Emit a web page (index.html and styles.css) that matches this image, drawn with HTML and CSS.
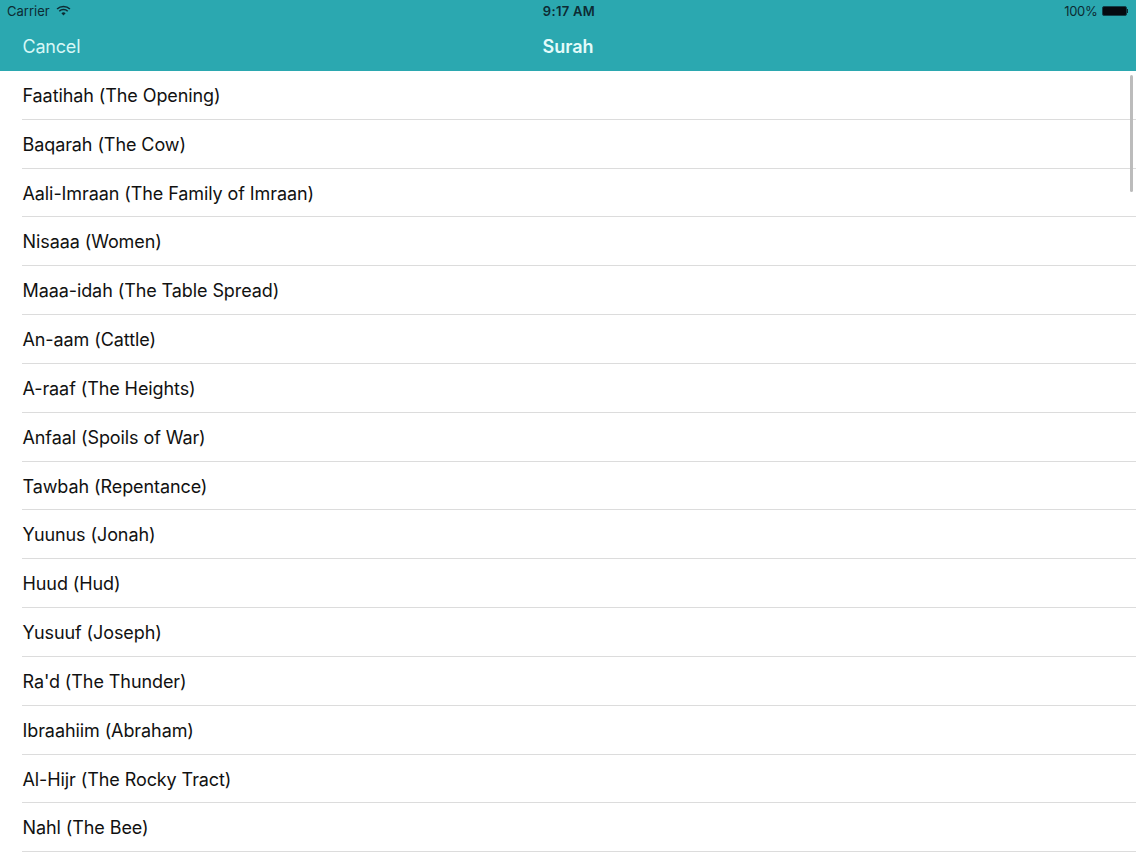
FILE: index.html
```html
<!DOCTYPE html>
<html lang="en">
<head>
<meta charset="utf-8">
<title>Surah</title>
<link rel="stylesheet" href="styles.css">
</head>
<body>
<div class="screen">
  <header class="header">
    <div class="status">
      <div class="status-left">
        <span>Carrier</span>
        <svg class="wifi" viewBox="0 0 16 12" width="15" height="11"><path d="M1 4.4a10 10 0 0 1 14 0" fill="none" stroke="#0d2b33" stroke-width="1.7"/><path d="M3.4 6.8a6.6 6.6 0 0 1 9.2 0" fill="none" stroke="#0d2b33" stroke-width="1.7"/><path d="M8 11.4 5.7 9a3.3 3.3 0 0 1 4.6 0z" fill="#0d2b33"/></svg>
      </div>
      <div class="status-time">9:17 AM</div>
      <div class="status-right">
        <span class="percent">100%</span>
        <span class="battery"><span class="battery-fill"></span><span class="battery-tip"></span></span>
      </div>
    </div>
    <nav class="nav">
      <span class="cancel">Cancel</span>
      <span class="title">Surah</span>
      <span class="nav-spacer"></span>
    </nav>
  </header>
  <ul class="list">
    <li class="row"><span>Faatihah (The Opening)</span></li>
    <li class="row"><span>Baqarah (The Cow)</span></li>
    <li class="row"><span>Aali-Imraan (The Family of Imraan)</span></li>
    <li class="row"><span>Nisaaa (Women)</span></li>
    <li class="row"><span>Maaa-idah (The Table Spread)</span></li>
    <li class="row"><span>An-aam (Cattle)</span></li>
    <li class="row"><span>A-raaf (The Heights)</span></li>
    <li class="row"><span>Anfaal (Spoils of War)</span></li>
    <li class="row"><span>Tawbah (Repentance)</span></li>
    <li class="row"><span>Yuunus (Jonah)</span></li>
    <li class="row"><span>Huud (Hud)</span></li>
    <li class="row"><span>Yusuuf (Joseph)</span></li>
    <li class="row"><span>Ra'd (The Thunder)</span></li>
    <li class="row"><span>Ibraahiim (Abraham)</span></li>
    <li class="row"><span>Al-Hijr (The Rocky Tract)</span></li>
    <li class="row"><span>Nahl (The Bee)</span></li>
  </ul>
  <div class="scrollbar"></div>
</div>
</body>
</html>
```
FILE: styles.css
```css
* { box-sizing: border-box; }
html, body { margin: 0; height: 100%; overflow: hidden; background: #fff; }
body { font-family: Inter, "Liberation Sans", sans-serif; }
.screen { position: relative; width: 1136px; height: 852px; overflow: hidden; }
.header { height: 71px; background: #2ba8b0; }
.status {
  height: 22px; padding: 0 7px;
  display: grid; grid-template-columns: 1fr auto 1fr; align-items: center;
  font-size: 13px; color: #0d2b33;
}
.status-left { display: flex; align-items: center; gap: 6px; }
.wifi { display: block; margin-top: -1px; }
.status-time { font-weight: 600; letter-spacing: 0.3px; margin-left: 2px; }
.status-right { display: flex; justify-content: flex-end; align-items: center; gap: 4px; padding-right: 1px; }
.percent { letter-spacing: -0.3px; }
.battery { display: flex; align-items: center; }
.battery-fill { width: 25px; height: 10px; background: #050a10; border: 1px solid #12404a; border-radius: 2px; }
.battery-tip { width: 1.5px; height: 4px; background: #0d2b33; }
.nav {
  height: 49px; padding: 0 22.5px 1px;
  display: grid; grid-template-columns: 1fr auto 1fr; align-items: center;
  color: #d6f7f6; font-size: 18px; letter-spacing: -0.2px;
}
.title { font-weight: 600; color: #e4fbfa; letter-spacing: 0; }
.list { margin: 0; padding: 0; list-style: none; }
.row {
  height: 48.84px; margin-left: 22px; padding: 1px 0 0 0.5px;
  display: flex; align-items: center;
  border-bottom: 1px solid #dcdcdc;
  font-size: 18px; color: #111; letter-spacing: -0.09px;
}
.scrollbar {
  position: absolute; right: 3px; top: 75px;
  width: 3px; height: 117px; border-radius: 2px; background: #bcbcbc;
}
```
